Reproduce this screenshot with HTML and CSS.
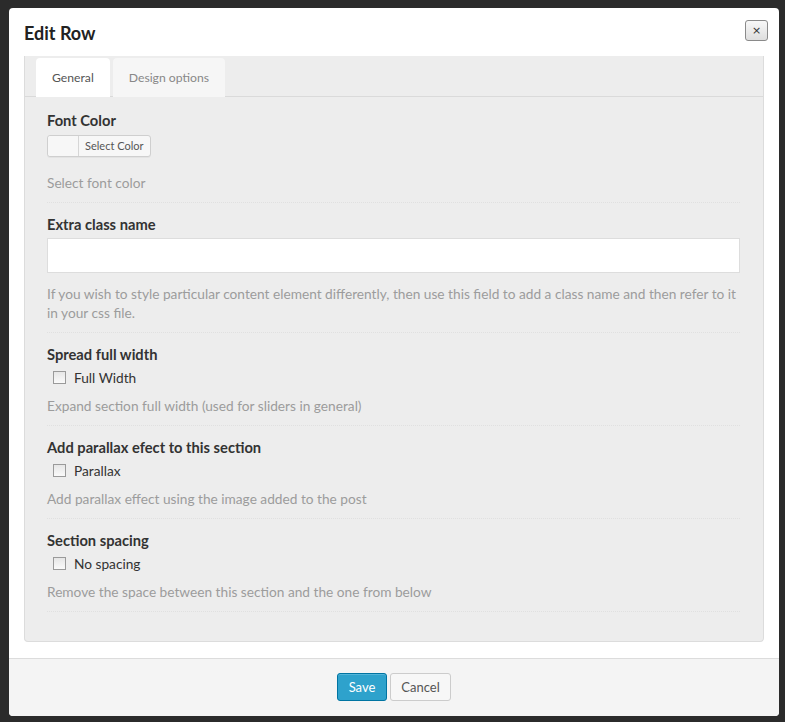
FILE: index.html
```html
<!DOCTYPE html>
<html>
<head>
<meta charset="utf-8">
<title>Edit Row</title>
<link rel="stylesheet" href="styles.css">
</head>
<body>
<div class="dialog">
  <div class="dialog-header">
    <h1 class="dialog-title">Edit Row</h1>
    <button class="close-btn" type="button">×</button>
  </div>
  <div class="dialog-body">
    <div class="panel">
      <div class="tabs">
        <div class="tab tab-active">General</div>
        <div class="tab">Design options</div>
      </div>
      <div class="panel-content">
        <div class="section">
          <div class="field-label">Font Color</div>
          <div class="color-btn"><span class="swatch"></span><span class="color-text">Select Color</span></div>
          <div class="help help-first">Select font color</div>
        </div>
        <div class="section">
          <div class="field-label">Extra class name</div>
          <div class="text-input"></div>
          <div class="help help-input">If you wish to style particular content element differently, then use this field to add a class name and then refer to it<br>in your css file.</div>
        </div>
        <div class="section">
          <div class="field-label">Spread full width</div>
          <label class="check-row"><span class="checkbox"></span>Full Width</label>
          <div class="help">Expand section full width (used for sliders in general)</div>
        </div>
        <div class="section">
          <div class="field-label">Add parallax efect to this section</div>
          <label class="check-row"><span class="checkbox"></span>Parallax</label>
          <div class="help">Add parallax effect using the image added to the post</div>
        </div>
        <div class="section">
          <div class="field-label">Section spacing</div>
          <label class="check-row"><span class="checkbox"></span>No spacing</label>
          <div class="help">Remove the space between this section and the one from below</div>
        </div>
      </div>
    </div>
  </div>
  <div class="dialog-footer">
    <button class="btn btn-primary" type="button">Save</button>
    <button class="btn btn-default" type="button">Cancel</button>
  </div>
</div>
</body>
</html>
```

FILE: styles.css
```css
html, body {
  margin: 0;
  padding: 0;
}
body {
  background: #2b2b2b;
  font-family: "Lato", "Open Sans", sans-serif;
  color: #333;
  width: 785px;
  height: 722px;
  overflow: hidden;
}
.dialog {
  margin: 8px 0 0 9px;
  width: 770px;
  height: 708px;
  background: #fff;
  border-radius: 4px;
  display: flex;
  flex-direction: column;
  overflow: hidden;
}
.dialog-header {
  height: 48px;
  display: flex;
  align-items: flex-start;
  justify-content: space-between;
  padding: 0 11px 0 15px;
  box-sizing: border-box;
}
.dialog-title {
  margin: 14px 0 0;
  font-size: 18px;
  line-height: 22px;
  font-weight: 700;
  color: #222;
}
.close-btn {
  margin-top: 12px;
  width: 23px;
  height: 21px;
  padding: 0;
  border: 1px solid #8a8a8a;
  border-radius: 3px;
  background: linear-gradient(#f8f8f8, #dedede);
  font-family: "DejaVu Sans", sans-serif;
  font-size: 11px;
  line-height: 18px;
  color: #333;
  text-align: center;
}
.dialog-body {
  padding: 0 15px;
  height: 586px;
}
.panel {
  height: 586px;
  box-sizing: border-box;
  background: #ededed;
  border: 1px solid #dcdcdc;
  border-top: none;
  border-radius: 0 0 4px 4px;
}
.tabs {
  display: flex;
  gap: 3px;
  padding: 2px 0 0 11px;
  height: 41px;
  box-sizing: border-box;
  border-bottom: 1px solid #dadada;
}
.tab {
  height: 39px;
  padding: 0 16px;
  line-height: 39px;
  font-size: 12.2px;
  color: #888;
  background: #f6f6f6;
  border-radius: 4px 4px 0 0;
}
.tab-active {
  background: #fff;
  color: #555;
}
.panel-content {
  padding: 15px 23px 28px 22px;
}
.section {
  padding: 13px 0 10px;
  border-bottom: 1px dotted #e0e0e0;
}
.section:first-child {
  padding-top: 0;
  padding-bottom: 10px;
}
.field-label {
  font-size: 14.7px;
  line-height: 16px;
  font-weight: 700;
  color: #333;
}
.color-btn {
  margin-top: 7px;
  width: 104px;
  height: 22px;
  box-sizing: border-box;
  border: 1px solid #cfcfcf;
  border-radius: 3px;
  background: #f7f7f7;
  display: flex;
  align-items: stretch;
  box-shadow: 0 1px 0 rgba(0,0,0,0.04);
}
.swatch {
  width: 30px;
  border-right: 1px solid #d6d6d6;
  background: #f7f7f7;
  border-radius: 3px 0 0 3px;
}
.color-text {
  font-size: 11px;
  line-height: 20px;
  color: #555;
  padding-left: 6px;
}
.text-input {
  margin-top: 6px;
  height: 35px;
  box-sizing: border-box;
  background: #fff;
  border: 1px solid #dddddd;
}
.help {
  margin-top: 9px;
  font-size: 13.7px;
  line-height: 19px;
  color: #9c9c9c;
}
.help-first {
  margin-top: 16px;
}
.help-input {
  margin-top: 11px;
  white-space: nowrap;
}
.check-row {
  margin-top: 6px;
  display: flex;
  align-items: center;
  height: 19px;
  font-size: 13.7px;
  color: #333;
  padding-left: 6px;
}
.checkbox {
  width: 11px;
  height: 11px;
  border: 1px solid #9a9a9a;
  background: linear-gradient(#e6e6e6, #fafafa);
  margin-right: 8px;
}
.dialog-footer {
  margin-top: 16px;
  border-top: 1px solid #dcdcdc;
  background: #f4f4f4;
  flex: 1;
  display: flex;
  justify-content: center;
  align-items: flex-start;
  gap: 3px;
  padding-top: 14px;
}
.btn {
  height: 28px;
  box-sizing: border-box;
  border-radius: 3px;
  font-family: "Lato", "Open Sans", sans-serif;
  font-size: 13px;
  padding: 0;
}
.btn-primary {
  width: 50px;
  background: #2ea2cc;
  border: 1px solid #0074a2;
  color: #fff;
  box-shadow: inset 0 1px 0 rgba(120,200,230,0.5);
}
.btn-default {
  width: 61px;
  background: #f7f7f7;
  border: 1px solid #cccccc;
  color: #555;
}
```
